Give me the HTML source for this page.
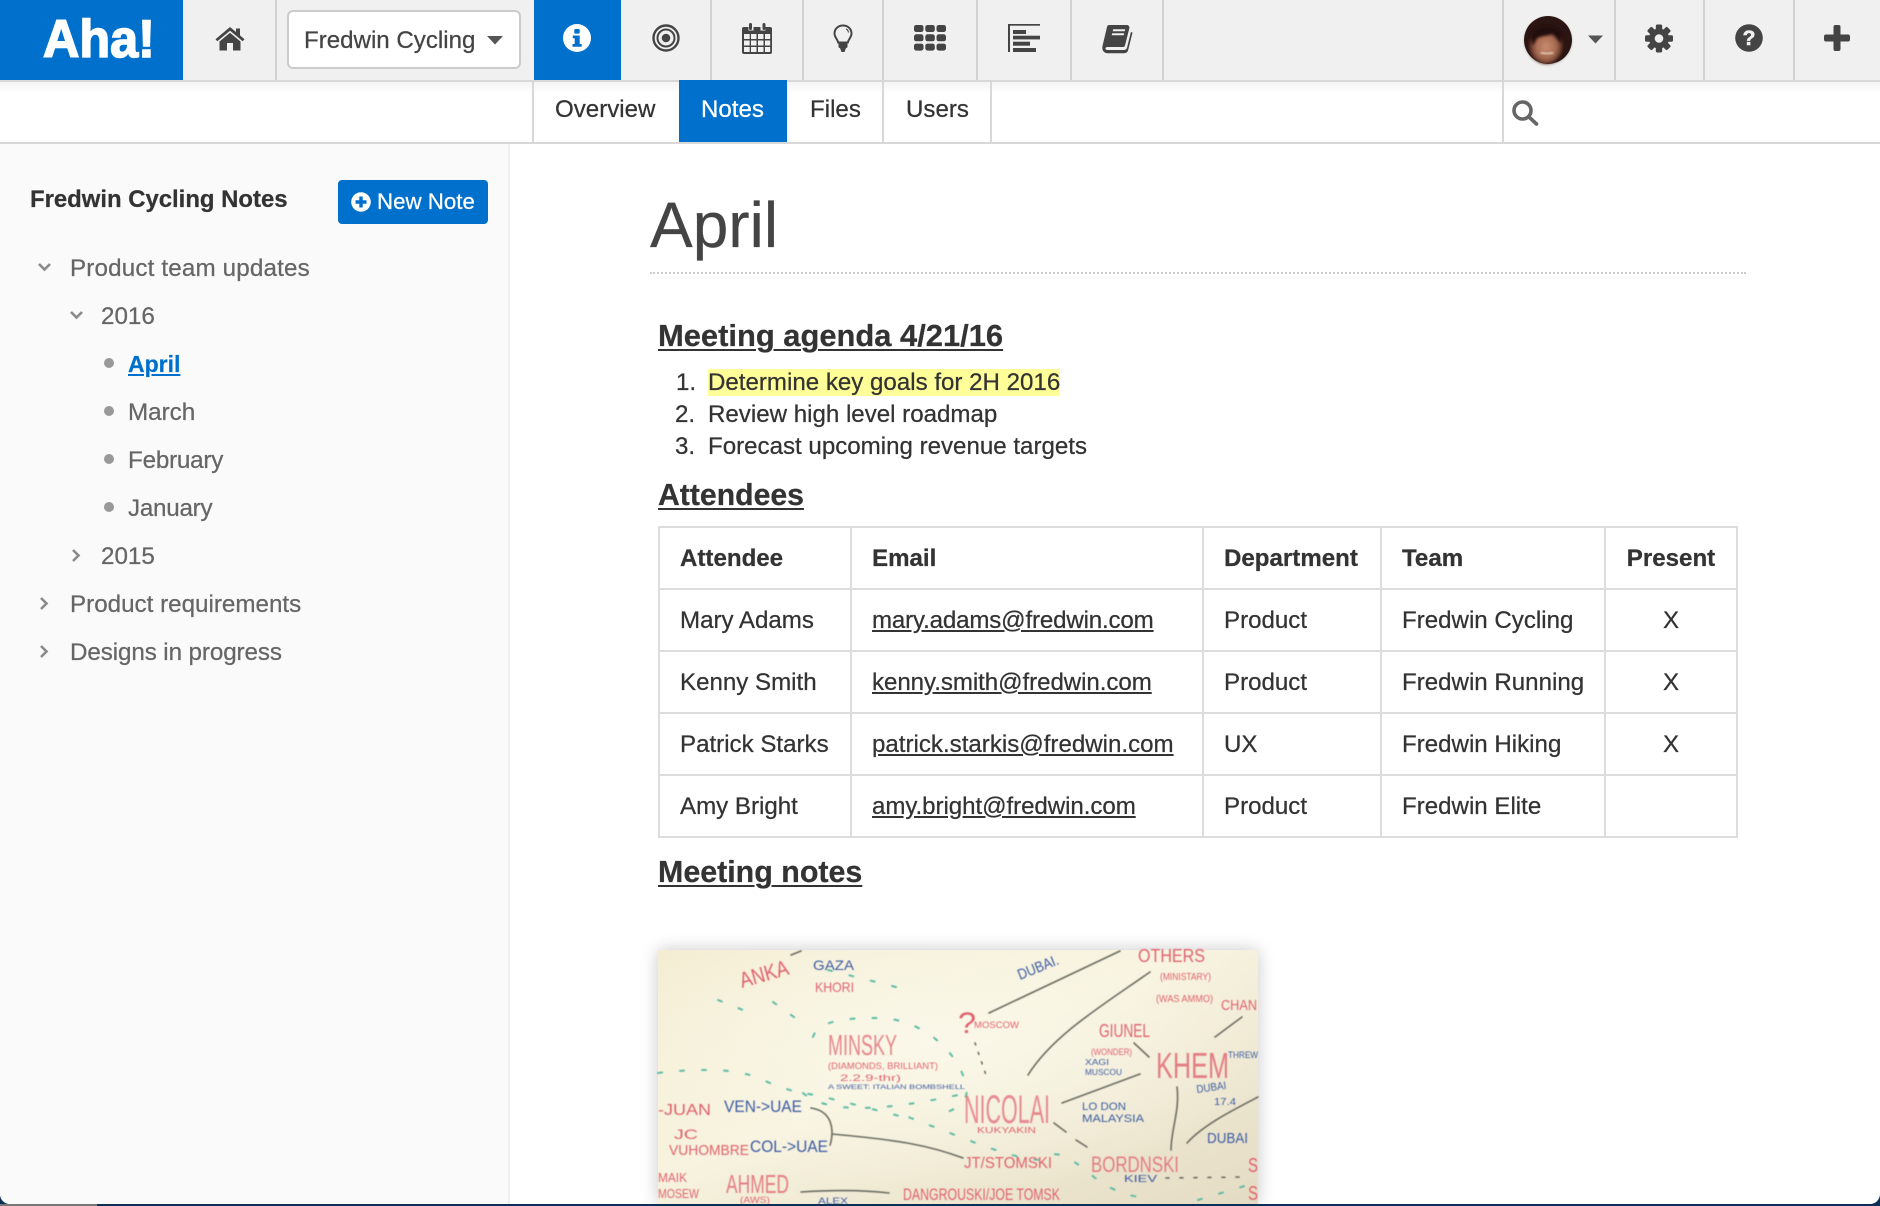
<!DOCTYPE html>
<html lang="en">
<head>
<meta charset="utf-8">
<title>Fredwin Cycling Notes</title>
<style>
html,body{margin:0;padding:0;width:1880px;height:1206px;overflow:hidden;background:#0c2f55;}
body{position:relative;font-family:"Liberation Sans",Arial,sans-serif;color:#333;font-size:24.1px;}
#strip{position:absolute;left:0;top:1204px;width:97px;height:2px;background:#777;}
#page{position:absolute;left:0;top:0;width:1880px;height:1204px;background:#fff;overflow:hidden;border-radius:0 0 10px 10px;}
#topbar{position:absolute;left:0;top:0;width:1880px;height:80px;background:#f0f0f0;border-bottom:2px solid #d8d8d8;}
.sep{position:absolute;top:0;width:2px;height:80px;background:#d2d2d2;}
.vs{position:absolute;top:82px;width:2px;height:60px;background:#d8d8d8;}
#logo{position:absolute;left:0;top:0;width:183px;height:80px;background:#0070cd;}
#logotxt{position:absolute;left:43px;top:10px;color:#fff;font-weight:bold;font-size:53px;line-height:60px;transform:scaleX(.95);transform-origin:0 0;-webkit-text-stroke:1.6px #fff;}
#sel{position:absolute;left:287px;top:10px;width:230px;height:55px;background:#fff;border:2px solid #ccc;border-radius:6px;}
#infoTab{position:absolute;left:534px;top:0;width:87px;height:80px;background:#0070cd;}
#sub{position:absolute;left:0;top:82px;width:1880px;height:60px;border-bottom:2px solid #d8d8d8;background:linear-gradient(#f4f4f4 0,#fff 12px);}
#notesTab{position:absolute;left:679px;top:80px;width:108px;height:62px;background:#0070cd;z-index:2;}
.t{position:absolute;white-space:nowrap;line-height:30px;-webkit-text-stroke:.25px currentColor;}
#side{position:absolute;left:0;top:144px;width:508px;height:1060px;background:#fafafa;border-right:2px solid #efefef;}
.s{color:#666;}
.dot{position:absolute;width:10px;height:10px;border-radius:50%;background:#999;left:104px;}
#btn{position:absolute;left:338px;top:180px;width:150px;height:44px;background:#0070cd;border-radius:4px;}
.h2{font-weight:bold;font-size:30.6px;text-decoration:underline;color:#333;text-decoration-thickness:2px;text-underline-offset:3px;}
#rule{position:absolute;left:650px;top:272px;width:1096px;height:0;border-top:2px dotted #ccc;}
table{position:absolute;left:658px;top:526px;width:1078px;height:312px;border-collapse:collapse;table-layout:fixed;font-size:24.1px;color:#333;-webkit-text-stroke:.25px currentColor;}
td,th{border:2px solid #dcdcdc;padding:1px 0 0 20px;text-align:left;height:60px;white-space:nowrap;box-sizing:border-box;overflow:visible;}
th{font-weight:bold;}
td a{color:#333;text-decoration:underline;}
td.c,th.c{text-align:center;padding-left:0;}
#wb{position:absolute;left:658px;top:950px;width:600px;height:254px;box-shadow:0 0 16px rgba(0,0,0,.22);}
svg{position:absolute;overflow:visible;}
</style>
</head>
<body>
<div id="strip"></div>
<div id="page">

<div id="side"></div>
<div class="t" style="left:30px;top:185px;font-weight:bold;font-size:23.9px;">Fredwin Cycling Notes</div>
<div id="btn"></div>
<svg style="left:350px;top:191px" width="22" height="22" viewBox="0 0 22 22"><circle cx="11" cy="11" r="9.800" fill="#fff"/><path d="M11 5.500v11M5.500 11h11" stroke="#0070cd" stroke-width="3.400"/></svg>
<div class="t" style="left:377px;top:187px;color:#fff;font-size:22.3px;">New Note</div>

<svg style="left:0;top:0" width="100" height="700" viewBox="0 0 100 700" fill="none" stroke="#8a8a8a" stroke-width="2.600">
<path d="M39 264l5.500 5.500 5.500-5.500"/><path d="M71 312l5.500 5.500 5.500-5.500"/>
<path d="M73 550l5.500 5.500-5.500 5.500"/><path d="M41 598l5.500 5.500-5.500 5.500"/><path d="M41 646l5.500 5.500-5.500 5.500"/>
</svg>
<div class="t s" style="left:70px;top:254px;font-size:24.2px;letter-spacing:.16px;">Product team updates</div>
<div class="t s" style="left:101px;top:302px;font-size:24.2px;">2016</div>
<div class="dot" style="top:358px"></div>
<div class="t" style="left:128px;top:349px;font-size:23px;font-weight:bold;color:#0070cd;text-decoration:underline;">April</div>
<div class="dot" style="top:406px"></div>
<div class="t s" style="left:128px;top:398px;font-size:24.2px;">March</div>
<div class="dot" style="top:454px"></div>
<div class="t s" style="left:128px;top:446px;font-size:24.2px;letter-spacing:-.2px;">February</div>
<div class="dot" style="top:502px"></div>
<div class="t s" style="left:128px;top:494px;font-size:24.2px;letter-spacing:-.25px;">January</div>
<div class="t s" style="left:101px;top:542px;font-size:24.2px;">2015</div>
<div class="t s" style="left:70px;top:590px;font-size:24.2px;">Product requirements</div>
<div class="t s" style="left:70px;top:638px;font-size:24.2px;letter-spacing:-.1px;">Designs in progress</div>

<div class="t" style="left:650px;top:190px;font-size:64px;line-height:70px;color:#444;">April</div>
<div id="rule"></div>
<div class="t h2" style="left:658px;top:321px;font-size:30.9px;">Meeting agenda 4/21/16</div>
<div class="t" style="left:676px;top:368px;">1.</div>
<div class="t" style="left:708px;top:368px;"><span style="background:#ffff99;">Determine key goals for 2H 2016</span></div>
<div class="t" style="left:675px;top:400px;">2.</div>
<div class="t" style="left:708px;top:400px;">Review high level roadmap</div>
<div class="t" style="left:675px;top:432px;">3.</div>
<div class="t" style="left:708px;top:432px;">Forecast upcoming revenue targets</div>
<div class="t h2" style="left:658px;top:481px;font-size:30.2px;">Attendees</div>

<table>
<colgroup><col style="width:192px"><col style="width:352px"><col style="width:178px"><col style="width:224px"><col style="width:132px"></colgroup>
<tr><th>Attendee</th><th>Email</th><th>Department</th><th>Team</th><th class="c">Present</th></tr>
<tr><td>Mary Adams</td><td><a style="letter-spacing:-.16px">mary.adams@fredwin.com</a></td><td>Product</td><td>Fredwin Cycling</td><td class="c">X</td></tr>
<tr><td>Kenny Smith</td><td><a style="letter-spacing:-.06px">kenny.smith@fredwin.com</a></td><td>Product</td><td>Fredwin Running</td><td class="c">X</td></tr>
<tr><td>Patrick Starks</td><td><a>patrick.starkis@fredwin.com</a></td><td>UX</td><td>Fredwin Hiking</td><td class="c">X</td></tr>
<tr><td>Amy Bright</td><td><a style="letter-spacing:-.06px">amy.bright@fredwin.com</a></td><td>Product</td><td>Fredwin Elite</td><td class="c"></td></tr>
</table>

<div class="t h2" style="left:658px;top:857px;font-size:30.4px;">Meeting notes</div>

<div id="wb">
<svg style="left:0;top:0" width="600" height="254" viewBox="0 0 600 254" font-family="Liberation Sans, sans-serif">
<defs>
<linearGradient id="g1" x1="0" y1="0" x2="1" y2="1"><stop offset="0" stop-color="#f3ecd0"/><stop offset=".45" stop-color="#f7f3de"/><stop offset="1" stop-color="#e4dbc3"/></linearGradient>
<radialGradient id="g2" cx=".45" cy=".35" r=".6"><stop offset="0" stop-color="#fbf8ea" stop-opacity=".9"/><stop offset="1" stop-color="#fbf8ea" stop-opacity="0"/></radialGradient>
<filter id="b" x="-5%" y="-5%" width="110%" height="110%"><feGaussianBlur stdDeviation=".45"/></filter>
</defs>
<rect width="600" height="254" fill="url(#g1)"/>
<rect width="600" height="254" fill="url(#g2)"/>
<g filter="url(#b)">
<g fill="none" stroke="#5dbca6" stroke-width="2" stroke-dasharray="4 18" stroke-linecap="round">
<path d="M0 123Q70 115 100 128T145 143T210 158T250 167T310 190T390 207T431 223T492 247"/>
<path d="M155 87C160 70 190 68 220 68C262 68 300 100 308 135C312 150 300 160 280 165"/>
<path d="M145 143C170 165 230 160 300 145"/>
<path d="M60 50L90 62M115 52L140 70M170 20L250 40"/>
<path d="M540 250L600 232"/>
</g>
<g fill="none" stroke="#6d6d63" stroke-width="1.600" stroke-linecap="round">
<path d="M331 63L462 1"/>
<path d="M370 125C395 85 445 55 492 22"/>
<path d="M404 153L482 124"/>
<path d="M396 173L408 182M418 190L429 197"/>
<path d="M476 93L491 107"/>
<path d="M519 137C522 160 513 180 513 200"/>
<path d="M529 193C545 175 575 160 600 147"/>
<path d="M557 87L584 67"/>
<path d="M153 158C180 162 174 190 172 195"/>
<path d="M174 184C240 190 270 195 305 208"/>
<path d="M143 242C175 240 205 240 231 243"/>
<path d="M133 5L143 1"/>
<path d="M508 228L586 227" stroke-dasharray="3 11"/>
<path d="M317 93L329 128" stroke-dasharray="2 8"/>
</g>
<g fill="#e0626e">
<text x="84" y="38" font-size="22" textLength="50" lengthAdjust="spacingAndGlyphs" transform="rotate(-16 84 38)">ANKA</text>
<text x="157" y="42" font-size="14" textLength="39" lengthAdjust="spacingAndGlyphs">KHORI</text>
<text x="300" y="83" font-size="30" textLength="18" lengthAdjust="spacingAndGlyphs">?</text>
<text x="316" y="78" font-size="9" textLength="45" lengthAdjust="spacingAndGlyphs">MOSCOW</text>
<text x="480" y="12" font-size="18" textLength="67" lengthAdjust="spacingAndGlyphs">OTHERS</text>
<text x="502" y="30" font-size="10" textLength="51" lengthAdjust="spacingAndGlyphs">(MINISTARY)</text>
<text x="498" y="52" font-size="10" textLength="57" lengthAdjust="spacingAndGlyphs">(WAS AMMO)</text>
<text x="563" y="60" font-size="15" textLength="36" lengthAdjust="spacingAndGlyphs">CHAN</text>
<text x="441" y="87" font-size="18" textLength="51" lengthAdjust="spacingAndGlyphs">GIUNEL</text>
<text x="433" y="105" font-size="9" textLength="41" lengthAdjust="spacingAndGlyphs">(WONDER)</text>
<text x="498" y="128" font-size="36" textLength="73" lengthAdjust="spacingAndGlyphs" opacity=".8">KHEM</text>
<text x="306" y="173" font-size="40" textLength="86" lengthAdjust="spacingAndGlyphs" opacity=".7">NICOLAI</text>
<text x="319" y="183" font-size="8" textLength="59" lengthAdjust="spacingAndGlyphs">KUKYAKIN</text>
<text x="170" y="105" font-size="29" textLength="69" lengthAdjust="spacingAndGlyphs" opacity=".75">MINSKY</text>
<text x="170" y="119" font-size="9" textLength="110" lengthAdjust="spacingAndGlyphs">(DIAMONDS, BRILLIANT)</text>
<text x="182" y="131" font-size="9" textLength="61" lengthAdjust="spacingAndGlyphs">2.2.9-thr)</text>
<text x="0" y="165" font-size="16" textLength="53" lengthAdjust="spacingAndGlyphs">-JUAN</text>
<text x="16" y="189" font-size="14" textLength="24" lengthAdjust="spacingAndGlyphs">JC</text>
<text x="11" y="205" font-size="15" textLength="80" lengthAdjust="spacingAndGlyphs">VUHOMBRE</text>
<text x="306" y="218" font-size="16" textLength="88" lengthAdjust="spacingAndGlyphs">JT/STOMSKI</text>
<text x="433" y="222" font-size="22" textLength="88" lengthAdjust="spacingAndGlyphs" opacity=".8">BORDNSKI</text>
<text x="0" y="232" font-size="13" textLength="29" lengthAdjust="spacingAndGlyphs">MAIK</text>
<text x="0" y="248" font-size="13" textLength="41" lengthAdjust="spacingAndGlyphs">MOSEW</text>
<text x="68" y="243" font-size="26" textLength="63" lengthAdjust="spacingAndGlyphs" opacity=".8">AHMED</text>
<text x="82" y="253" font-size="9" textLength="30" lengthAdjust="spacingAndGlyphs">(AWS)</text>
<text x="245" y="250" font-size="17" textLength="157" lengthAdjust="spacingAndGlyphs">DANGROUSKI/JOE TOMSK</text>
<text x="590" y="222" font-size="20" textLength="10" lengthAdjust="spacingAndGlyphs">S</text>
<text x="590" y="250" font-size="20" textLength="10" lengthAdjust="spacingAndGlyphs">S</text>
</g>
<g fill="#3d5ba3">
<text x="155" y="20" font-size="14" textLength="41" lengthAdjust="spacingAndGlyphs">GAZA</text>
<text x="362" y="30" font-size="15" textLength="43" lengthAdjust="spacingAndGlyphs" transform="rotate(-22 362 30)">DUBAI.</text>
<text x="427" y="115" font-size="8" textLength="24" lengthAdjust="spacingAndGlyphs">XAGI</text>
<text x="427" y="125" font-size="8" textLength="37" lengthAdjust="spacingAndGlyphs">MUSCOU</text>
<text x="570" y="108" font-size="9" textLength="30" lengthAdjust="spacingAndGlyphs">THREW</text>
<text x="539" y="143" font-size="11" textLength="30" lengthAdjust="spacingAndGlyphs" transform="rotate(-8 539 143)">DUBAI</text>
<text x="556" y="155" font-size="10" textLength="22" lengthAdjust="spacingAndGlyphs">17.4</text>
<text x="424" y="160" font-size="11" textLength="44" lengthAdjust="spacingAndGlyphs">LO DON</text>
<text x="424" y="172" font-size="11" textLength="62" lengthAdjust="spacingAndGlyphs">MALAYSIA</text>
<text x="170" y="139" font-size="6" textLength="137" lengthAdjust="spacingAndGlyphs">A SWEET: ITALIAN BOMBSHELL</text>
<text x="66" y="162" font-size="17" textLength="78" lengthAdjust="spacingAndGlyphs">VEN-&gt;UAE</text>
<text x="92" y="202" font-size="17" textLength="78" lengthAdjust="spacingAndGlyphs">COL-&gt;UAE</text>
<text x="466" y="232" font-size="10" textLength="33" lengthAdjust="spacingAndGlyphs">KIEV</text>
<text x="549" y="193" font-size="15" textLength="41" lengthAdjust="spacingAndGlyphs">DUBAI</text>
<text x="160" y="254" font-size="9" textLength="30" lengthAdjust="spacingAndGlyphs">ALEX</text>
</g>
</g>
</svg>
</div>

<div id="sub"></div>
<div class="vs" style="left:532px"></div>
<div class="vs" style="left:882px"></div>
<div class="vs" style="left:990px"></div>
<div class="vs" style="left:1502px"></div>
<div id="notesTab"></div>
<div class="t" style="left:555px;top:95px;">Overview</div>
<div class="t" style="left:701px;top:95px;color:#fff;z-index:3;">Notes</div>
<div class="t" style="left:810px;top:95px;">Files</div>
<div class="t" style="left:906px;top:95px;">Users</div>
<svg style="left:1510px;top:98px" width="30" height="30" viewBox="0 0 30 30" fill="none" stroke="#666" stroke-width="3.600"><circle cx="12.500" cy="12.500" r="8.500"/><path d="M19 19l7.500 7" stroke-linecap="round"/></svg>

<div id="topbar"></div>
<div id="logo"></div>
<div id="logotxt">Aha!</div>
<div class="sep" style="left:275px"></div>
<div class="sep" style="left:710px"></div>
<div class="sep" style="left:802px"></div>
<div class="sep" style="left:882px"></div>
<div class="sep" style="left:976px"></div>
<div class="sep" style="left:1070px"></div>
<div class="sep" style="left:1162px"></div>
<div class="sep" style="left:1502px"></div>
<div class="sep" style="left:1614px"></div>
<div class="sep" style="left:1703px"></div>
<div class="sep" style="left:1793px"></div>

<svg style="left:215px;top:26px" width="30" height="25" viewBox="0 0 30 25" fill="#444"><path d="M15 1L0.500 13.200 2.300 15.300 15 4.700 27.700 15.300 29.500 13.200 25 9.400V2.500H21V6L15 1Z"/><path d="M15 6.800L4.500 15.500V24.500H12V17H18V24.500H25.500V15.500Z"/></svg>

<div id="sel"></div>
<div class="t" style="left:304px;top:26px;color:#444;">Fredwin Cycling</div>
<svg style="left:487px;top:35px" width="16" height="10" viewBox="0 0 16 10"><path d="M0 1h16L8 9.500Z" fill="#555"/></svg>

<div id="infoTab"></div>
<svg style="left:563px;top:24px" width="28" height="28" viewBox="0 0 28 28"><circle cx="14" cy="14" r="14" fill="#fff"/><rect x="11.300" y="5" width="5.400" height="4.600" rx="1" fill="#0070cd"/><path d="M9.800 11.500h6.900v8.500h2v2.800H9.500V20h2.200v-5.700H9.800Z" fill="#0070cd"/></svg>

<svg style="left:651px;top:23px" width="30" height="30" viewBox="0 0 30 30" fill="none" stroke="#444"><circle cx="15" cy="15" r="12.500" stroke-width="2.400"/><circle cx="15" cy="15" r="8.500" stroke-width="2"/><circle cx="15" cy="15" r="4.300" fill="#444" stroke="none"/></svg>

<svg style="left:742px;top:22px" width="30" height="33" viewBox="0 0 30 33"><path d="M2 5h4.500v3.500h5V5h7v3.500h5V5H28a2 2 0 0 1 2 2v23a2 2 0 0 1-2 2H2a2 2 0 0 1-2-2V7a2 2 0 0 1 2-2Z" fill="#444"/><rect x="7" y="1" width="3" height="7" rx="1.500" fill="#444"/><rect x="20.500" y="1" width="3" height="7" rx="1.500" fill="#444"/><g fill="#f0f0f0"><rect x="2" y="12" width="5.700" height="5"/><rect x="9" y="12" width="5.500" height="5"/><rect x="16" y="12" width="5.500" height="5"/><rect x="23" y="12" width="5.200" height="5"/><rect x="2" y="18.500" width="5.700" height="5"/><rect x="9" y="18.500" width="5.500" height="5"/><rect x="16" y="18.500" width="5.500" height="5"/><rect x="23" y="18.500" width="5.200" height="5"/><rect x="2" y="25" width="5.700" height="5"/><rect x="9" y="25" width="5.500" height="5"/><rect x="16" y="25" width="5.500" height="5"/><rect x="23" y="25" width="5.200" height="5"/></g></svg>

<svg style="left:833px;top:24px" width="20" height="29" viewBox="0 0 20 29"><path d="M10 1.500C5 1.500 1.500 5 1.500 9.500c0 3.600 2.800 5.400 3.700 9h9.600c.9-3.600 3.700-5.400 3.700-9C18.500 5 15 1.500 10 1.500Z" fill="none" stroke="#444" stroke-width="2"/><rect x="5.500" y="18.500" width="9" height="5.500" rx="1.500" fill="#444"/><path d="M7 24h6l-1.500 4h-3Z" fill="#444"/><path d="M13 5c1.500.7 2.300 1.900 2.500 3.500" fill="none" stroke="#444" stroke-width="1.100"/></svg>

<svg style="left:914px;top:25px" width="32" height="26" viewBox="0 0 32 26" fill="#444"><rect x="0" y="0" width="9.500" height="7" rx="2.300"/><rect x="11.300" y="0" width="9.500" height="7" rx="2.300"/><rect x="22.500" y="0" width="9.500" height="7" rx="2.300"/><rect x="0" y="9.300" width="9.500" height="7" rx="2.300"/><rect x="11.300" y="9.300" width="9.500" height="7" rx="2.300"/><rect x="22.500" y="9.300" width="9.500" height="7" rx="2.300"/><rect x="0" y="18.600" width="9.500" height="7" rx="2.300"/><rect x="11.300" y="18.600" width="9.500" height="7" rx="2.300"/><rect x="22.500" y="18.600" width="9.500" height="7" rx="2.300"/></svg>

<svg style="left:1008px;top:24px" width="32" height="28" viewBox="0 0 32 28" fill="#444"><rect x="0" y="0" width="32" height="1.700"/><rect x="0" y="0" width="2" height="28"/><rect x="5" y="6" width="13" height="4"/><rect x="5" y="11.700" width="27" height="3.700"/><rect x="5" y="17.700" width="17" height="4"/><rect x="5" y="24" width="23" height="4"/></svg>

<svg style="left:1102px;top:24px" width="31" height="29" viewBox="0 0 31 29"><path d="M7.500 1H25a2.500 2.500 0 0 1 2.400 3L23 21.500a2 2 0 0 1-2 1.500H5.500c-2.700 0-2.700 3 0 3H22c1.800 0 2.600-.8 3-2.200l4-16 1.500.9-4.300 17.300c-.5 2-2 3.200-4.200 3.200H5C1.400 28.700-.4 25.500.5 22L5 3a2.500 2.500 0 0 1 2.500-2Z" fill="#444"/><rect x="11" y="5.300" width="12" height="2" fill="#f0f0f0" transform="skewX(-14)" transform-origin="17 6"/><rect x="10" y="9.300" width="12" height="2" fill="#f0f0f0" transform="skewX(-14)" transform-origin="16 10"/></svg>

<svg style="left:1522px;top:14px" width="54" height="54" viewBox="0 0 54 54"><defs><radialGradient id="face" cx=".5" cy=".55" r=".55"><stop offset="0" stop-color="#c88e70"/><stop offset=".55" stop-color="#a56a50"/><stop offset=".85" stop-color="#5a3024"/><stop offset="1" stop-color="#2a1410"/></radialGradient><filter id="fb"><feGaussianBlur stdDeviation="1.400"/></filter></defs><circle cx="26" cy="27" r="24" fill="rgba(0,0,0,.18)" filter="url(#fb)"/><circle cx="26" cy="26" r="24" fill="#2b1512"/><ellipse cx="24" cy="31" rx="17" ry="19" fill="url(#face)" filter="url(#fb)"/><path d="M8 22c4-12 26-14 32-3l-1 10c-3-3-6-8-9-9-5 2-12 2-15 4l-4 7Z" fill="#24110f" filter="url(#fb)"/><path d="M19 38c3 3 9 3 12 0" stroke="#ecd8c8" stroke-width="2.200" fill="none" filter="url(#fb)"/><path d="M15 28h6M29 28h6" stroke="#3a2018" stroke-width="2" filter="url(#fb)"/></svg>
<svg style="left:1588px;top:35px" width="15" height="9" viewBox="0 0 15 9"><path d="M0 .5h15L7.500 8.500Z" fill="#555"/></svg>

<svg style="left:1645px;top:24px" width="28" height="29" viewBox="0 0 28 29"><g fill="#444"><circle cx="14" cy="14.500" r="10"/><rect x="10.800" y="0.500" width="6.400" height="28" rx="1.600"/><rect x="10.800" y="0.500" width="6.400" height="28" rx="1.600" transform="rotate(45 14 14.500)"/><rect x="10.800" y="0.500" width="6.400" height="28" rx="1.600" transform="rotate(90 14 14.500)"/><rect x="10.800" y="0.500" width="6.400" height="28" rx="1.600" transform="rotate(135 14 14.500)"/></g><circle cx="14" cy="14.500" r="4.300" fill="#f0f0f0"/></svg>

<svg style="left:1735px;top:24px" width="28" height="28" viewBox="0 0 28 28"><circle cx="14" cy="14" r="13.800" fill="#444"/><text x="14" y="21" text-anchor="middle" font-family="Liberation Sans, sans-serif" font-weight="bold" font-size="21" fill="#f0f0f0" stroke="#f0f0f0" stroke-width=".6">?</text></svg>

<svg style="left:1824px;top:25px" width="26" height="26" viewBox="0 0 26 26" fill="#444"><rect x="9.500" y="0" width="7" height="26" rx="2"/><rect x="0" y="9.500" width="26" height="7" rx="2"/></svg>

</div>
</body>
</html>
